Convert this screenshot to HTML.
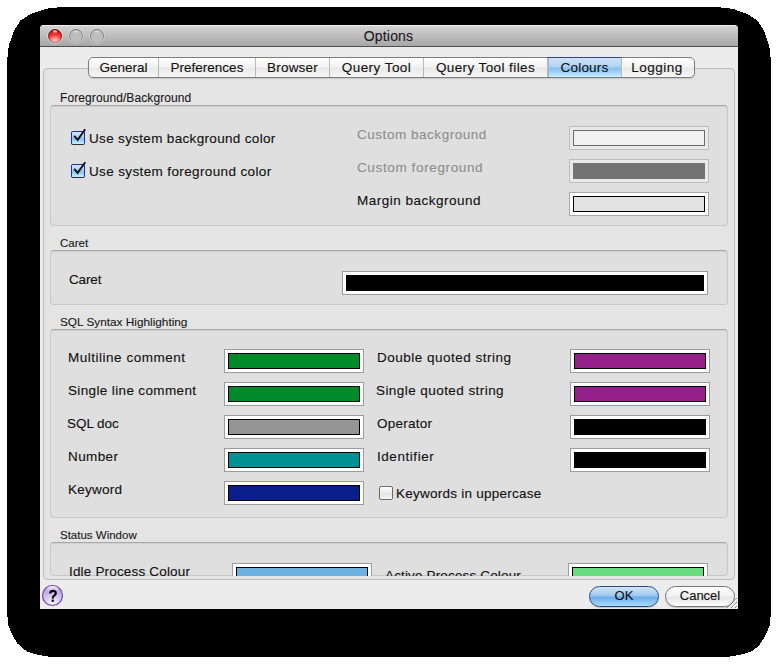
<!DOCTYPE html>
<html><head><meta charset="utf-8">
<style>
*{box-sizing:border-box;margin:0;padding:0}
html,body{width:778px;height:664px;overflow:hidden;background:#fff}
body{position:relative;font-family:"Liberation Sans",sans-serif;color:#000;-webkit-text-stroke:0.12px currentColor}
div{position:absolute}
#shadow{left:7px;top:7px;width:764px;height:650px;background:#000;border-radius:55px 55px 45px 45px}
#win{left:40px;top:25px;width:698px;height:584px;background:#ececec;border-radius:4px 4px 0 0;overflow:hidden}
#title{left:40px;top:25px;width:698px;height:22px;background:linear-gradient(#ededed 0,#ededed 1px,#d3d3d3 1px,#bdbdbd 50%,#a7a7a7);border-bottom:1px solid #4d4d4d;border-radius:4px 4px 0 0}
#title .t{left:-0.5px;width:698px;top:3px;text-align:center;font-size:14px;line-height:16px;color:#1a1a1a;letter-spacing:0.18px}
.btn{top:29px;width:14px;height:14px;border-radius:50%}
.red{background:radial-gradient(circle at 50% 80%,#ffc8c8 0,#f05858 45%,#d81c1c 75%,#9a1a1a 100%);box-shadow:0 0 0 .5px rgba(90,0,0,.5)}
.gray{background:radial-gradient(circle at 50% 80%,#dedede 0,#cbcbcb 55%,#a9a9a9 85%,#8c8c8c 100%)}
.panel{left:43px;top:68px;width:692px;height:512px;background:#e4e4e4;border:1px solid #bdbdbd;border-radius:4px}
.tabs{left:88px;top:57px;height:21px;width:607px;border:1px solid #7d7d7d;border-radius:5px;background:linear-gradient(#fefefe,#f3f3f3 45%,#e9e9e9 55%,#f7f7f7);overflow:hidden;box-shadow:0 1px 1px rgba(0,0,0,.12)}
.tab{top:0;height:19px;font-size:13.5px;text-align:center;line-height:19px;border-right:1px solid #b9b9b9;white-space:nowrap;color:#111}
.sel{background:linear-gradient(#cfe3f7,#b0d3f2 45%,#88bfee 55%,#a6d8fa 80%,#c6f0ff);box-shadow:inset 1px 0 0 #9ab8d8}
.glabel{font-size:11.5px;line-height:14px;color:#1a1a1a;white-space:nowrap}
.gbox{background:#dfdfdf;border:1px solid #c8c8c8;border-top-color:#a9a9a9;border-radius:4px;box-shadow:inset 0 1px 0 #d0d0d0}
.lbl{font-size:13.5px;line-height:17px;color:#111;white-space:nowrap}
.dis{color:#8e8e8e}
.sw{height:24px;background:#fff;border:1px solid #9c9c9c}
.sw i{position:absolute;left:3px;top:3px;right:3px;bottom:3px;border:1px solid #000;display:block}
.swd{background:#e9e9e9;border-color:#bdbdbd}
.cb{width:14px;height:14px;border:1px solid #6b6b6b;border-radius:2px;background:linear-gradient(#fdfdfd,#ececec 50%,#e0e0e0 51%,#fafafa)}
.cbon{border-color:#1c2f9c;border-bottom-color:#2a2a40;background:linear-gradient(#d6e8fa,#a9d0f2 45%,#86c0ee 55%,#c6f2ff)}
.pbtn{top:586px;height:21px;border-radius:10.5px;font-size:13px;line-height:18px;box-shadow:0 1px 1px rgba(0,0,0,.18);text-align:center;color:#111}
</style></head><body>
<svg style="position:absolute;left:0;top:0" width="778" height="664"><path d="M7.0,63.0 L8.0,51.0 L9.0,45.0 L10.0,42.0 L11.0,39.5 L12.0,36.4 L13.0,33.7 L14.0,31.0 L15.0,29.0 L17.0,25.8 L19.0,23.0 L20.5,20.5 L23.0,19.0 L25.8,17.0 L29.0,15.0 L31.0,14.0 L33.7,13.0 L36.4,12.0 L39.5,11.0 L42.0,10.0 L45.0,9.0 L51.0,8.0 L63.0,7.0 L715.0,7.0 L727.0,8.0 L733.0,9.0 L736.0,10.0 L738.5,11.0 L741.6,12.0 L744.3,13.0 L747.0,14.0 L749.0,15.0 L752.2,17.0 L755.0,19.0 L757.5,20.5 L759.0,23.0 L761.0,25.8 L763.0,29.0 L764.0,31.0 L765.0,33.7 L766.0,36.4 L767.0,39.5 L768.0,42.0 L769.0,45.0 L770.0,51.0 L771.0,63.0 L771.0,611.0 L770.5,617.0 L769.5,626.0 L768.0,629.5 L767.0,632.0 L765.5,635.0 L764.0,638.0 L762.0,641.0 L760.5,643.5 L758.5,645.5 L756.5,647.5 L754.0,649.5 L751.0,651.5 L748.0,652.5 L744.5,653.8 L739.5,654.8 L734.0,655.8 L727.0,657.0 L51.0,657.0 L44.0,655.8 L38.5,654.8 L33.5,653.8 L30.0,652.5 L27.0,651.5 L24.0,649.5 L21.5,647.5 L19.5,645.5 L17.5,643.5 L16.0,641.0 L14.0,638.0 L12.5,635.0 L11.0,632.0 L10.0,629.5 L8.5,626.0 L7.5,617.0 L7.0,611.0 Z" fill="#000" shape-rendering="crispEdges"/></svg>
<div id="win"></div>
<div id="title"><div class="t">Options</div></div>
<svg style="position:absolute;left:46px;top:27px" width="62" height="18" viewBox="0 0 62 18">
<defs>
<radialGradient id="rg" cx="9" cy="15.5" r="11.5" gradientUnits="userSpaceOnUse"><stop offset="0" stop-color="#ffd4d4"/><stop offset=".35" stop-color="#fb9a9a"/><stop offset=".65" stop-color="#f03c3c"/><stop offset=".85" stop-color="#de2a2a"/><stop offset="1" stop-color="#a01616"/></radialGradient>
<radialGradient id="gg" cx="9" cy="15" r="11" gradientUnits="userSpaceOnUse"><stop offset="0" stop-color="#e0e0e0"/><stop offset=".6" stop-color="#d0d0d0"/><stop offset="1" stop-color="#bdbdbd"/></radialGradient>
<linearGradient id="hl" x1="0" y1="0" x2="0" y2="1"><stop offset="0" stop-color="#fff" stop-opacity=".95"/><stop offset="1" stop-color="#fff" stop-opacity="0"/></linearGradient>
<linearGradient id="rr" x1="0" y1="0" x2="0" y2="1"><stop offset="0" stop-color="#6a0e0e"/><stop offset=".6" stop-color="#a82828"/><stop offset="1" stop-color="#c86a6a"/></linearGradient>
<linearGradient id="gr" x1="0" y1="0" x2="0" y2="1"><stop offset="0" stop-color="#767676"/><stop offset=".6" stop-color="#8e8e8e"/><stop offset="1" stop-color="#b4b4b4"/></linearGradient>
</defs>
<circle cx="9" cy="9" r="7.6" fill="none" stroke="#dfe3e3" stroke-width="1" opacity=".6"/>
<circle cx="9" cy="9" r="6.5" fill="url(#rg)" stroke="url(#rr)" stroke-width="1"/>
<ellipse cx="9" cy="4.9" rx="2.3" ry="1.6" fill="url(#hl)"/>
<circle cx="30" cy="9" r="7.6" fill="none" stroke="#dadada" stroke-width="1" opacity=".5"/>
<circle cx="30" cy="9" r="6.5" fill="url(#gg)" stroke="url(#gr)" stroke-width="1"/>
<ellipse cx="30" cy="5" rx="2.6" ry="1.6" fill="url(#hl)" opacity=".6"/>
<circle cx="51" cy="9" r="7.6" fill="none" stroke="#dadada" stroke-width="1" opacity=".5"/>
<circle cx="51" cy="9" r="6.5" fill="url(#gg)" stroke="url(#gr)" stroke-width="1"/>
<ellipse cx="51" cy="5" rx="2.6" ry="1.6" fill="url(#hl)" opacity=".6"/>
</svg>

<div class="panel"></div>
<div class="tabs">
  <div class="tab" style="left:0;width:70px">General</div>
  <div class="tab" style="left:70px;width:97px">Preferences</div>
  <div class="tab" style="left:167px;width:74px;letter-spacing:0.2px">Browser</div>
  <div class="tab" style="left:241px;width:94px;letter-spacing:0.45px">Query Tool</div>
  <div class="tab" style="left:335px;width:124px;letter-spacing:0.4px">Query Tool files</div>
  <div class="tab sel" style="left:459px;width:74px;letter-spacing:0.2px">Colours</div>
  <div class="tab" style="left:531px;width:74px;border-right:0;letter-spacing:0.47px;background:transparent">Logging</div>
</div>

<div style="left:547px;top:57px;width:74px;height:1px;background:#34448a"></div>
<!-- group 1 -->
<div class="glabel" style="left:60px;top:91px;font-size:12px;letter-spacing:0.09px">Foreground/Background</div>
<div class="gbox" style="left:50px;top:105px;width:678px;height:121px"></div>
<div class="cb cbon" style="left:71px;top:131px"></div><svg style="position:absolute;left:69px;top:127px" width="20" height="20" viewBox="-2 -4 20 20"><path d="M3.2,4.8 L6.7,8.9 L14.2,-1.8" fill="none" stroke="#15151c" stroke-width="2" stroke-linecap="butt" stroke-linejoin="miter"/></svg>
<div class="lbl" style="left:89px;top:130px;letter-spacing:0.327px">Use system background color</div>
<div class="cb cbon" style="left:71px;top:164px"></div><svg style="position:absolute;left:69px;top:160px" width="20" height="20" viewBox="-2 -4 20 20"><path d="M3.2,4.8 L6.7,8.9 L14.2,-1.8" fill="none" stroke="#15151c" stroke-width="2" stroke-linecap="butt" stroke-linejoin="miter"/></svg>
<div class="lbl" style="left:89px;top:163px;letter-spacing:0.368px">Use system foreground color</div>
<div class="lbl dis" style="left:357px;top:126px;letter-spacing:0.534px">Custom background</div>
<div class="lbl dis" style="left:357px;top:159px;letter-spacing:0.623px">Custom foreground</div>
<div class="lbl" style="left:357px;top:192px;letter-spacing:0.500px">Margin background</div>
<div class="sw swd" style="left:569px;top:126px;width:140px"><i style="border-color:#6c6c6c;background:#f1f1f1"></i></div>
<div class="sw swd" style="left:569px;top:159px;width:140px"><i style="border-color:#737373;background:#737373"></i></div>
<div class="sw" style="left:569px;top:192px;width:140px;border-color:#a8a8a8"><i style="background:#e3e3e3"></i></div>

<!-- group 2 -->
<div class="glabel" style="left:60px;top:236px">Caret</div>
<div class="gbox" style="left:50px;top:250px;width:678px;height:55px"></div>
<div class="lbl" style="left:69px;top:271px;letter-spacing:-0.150px">Caret</div>
<div class="sw" style="left:342px;top:271px;width:366px"><i style="background:#000"></i></div>

<!-- group 3 -->
<div class="glabel" style="left:60px;top:315px;font-size:11.8px">SQL Syntax Highlighting</div>
<div class="gbox" style="left:50px;top:329px;width:678px;height:189px"></div>
<div class="lbl" style="left:68px;top:349px;letter-spacing:0.511px">Multiline comment</div>
<div class="lbl" style="left:68px;top:382px;letter-spacing:0.360px">Single line comment</div>
<div class="lbl" style="left:67px;top:415px;letter-spacing:-0.063px">SQL doc</div>
<div class="lbl" style="left:68px;top:448px;letter-spacing:0.380px">Number</div>
<div class="lbl" style="left:68px;top:481px;letter-spacing:0.230px">Keyword</div>
<div class="sw" style="left:224px;top:349px;width:140px"><i style="background:#008a2a"></i></div>
<div class="sw" style="left:224px;top:382px;width:140px"><i style="background:#008a2a"></i></div>
<div class="sw" style="left:224px;top:415px;width:140px"><i style="background:#959595"></i></div>
<div class="sw" style="left:224px;top:448px;width:140px"><i style="background:#009292"></i></div>
<div class="sw" style="left:224px;top:481px;width:140px"><i style="background:#0a1e8c"></i></div>
<div class="lbl" style="left:377px;top:349px;letter-spacing:0.493px">Double quoted string</div>
<div class="lbl" style="left:376px;top:382px;letter-spacing:0.435px">Single quoted string</div>
<div class="lbl" style="left:377px;top:415px;letter-spacing:0.257px">Operator</div>
<div class="lbl" style="left:377px;top:448px;letter-spacing:0.558px">Identifier</div>
<div class="sw" style="left:570px;top:349px;width:140px"><i style="background:#95208b"></i></div>
<div class="sw" style="left:570px;top:382px;width:140px"><i style="background:#95208b"></i></div>
<div class="sw" style="left:570px;top:415px;width:140px"><i style="background:#000"></i></div>
<div class="sw" style="left:570px;top:448px;width:140px"><i style="background:#000"></i></div>
<div class="cb" style="left:379px;top:486px"></div>
<div class="lbl" style="left:396px;top:485px;letter-spacing:0.245px">Keywords in uppercase</div>

<!-- group 4 (clipped) -->
<div class="glabel" style="left:60px;top:528px">Status Window</div>
<div style="left:44px;top:540px;width:690px;height:37px;overflow:hidden">
  <div class="gbox" style="left:6px;top:2px;width:678px;height:34px"></div>
  <div style="left:0;top:0;width:690px;height:36px;overflow:hidden">
  <div class="lbl" style="left:25px;top:23px;letter-spacing:0.174px">Idle Process Colour</div>
  <div class="sw" style="left:188px;top:23px;width:140px"><i style="background:#6cb2e0"></i></div>
  <div class="lbl" style="left:341px;top:27px;letter-spacing:0.150px">Active Process Colour</div>
  <div class="sw" style="left:524px;top:23px;width:140px"><i style="background:#68dc7e"></i></div>
  </div>
</div>

<!-- bottom -->
<svg style="position:absolute;left:40px;top:583px" width="25" height="25" viewBox="0 0 25 25">
<defs><radialGradient id="hg" cx="12.5" cy="21" r="16" gradientUnits="userSpaceOnUse"><stop offset="0" stop-color="#fdf6ff"/><stop offset=".45" stop-color="#ddd0f4"/><stop offset="1" stop-color="#b4a0e0"/></radialGradient>
<linearGradient id="hh" x1="0" y1="0" x2="0" y2="1"><stop offset="0" stop-color="#fff" stop-opacity=".9"/><stop offset="1" stop-color="#fff" stop-opacity="0"/></linearGradient></defs>
<circle cx="12.5" cy="12.5" r="10" fill="url(#hg)" stroke="#6c3f9c" stroke-width="1.1"/>
<ellipse cx="12.5" cy="6" rx="6" ry="3" fill="url(#hh)"/>
<path d="M10.2,10.6 C10.2,8.6 11.4,7.9 13,7.9 C14.7,7.9 15.8,8.9 15.8,10.3 C15.8,11.9 14.4,12.4 13.5,13.2 C12.9,13.8 12.8,14.4 12.8,15.6" fill="none" stroke="#0a0a0a" stroke-width="2.2"/><rect x="11.6" y="16.6" width="2.3" height="2.2" fill="#0a0a0a"/>
</svg>
<div class="pbtn" style="left:589px;width:70px;border:1px solid #2a4a8a;background:linear-gradient(#d4e6f9,#9ac6f0 48%,#6aaaea 52%,#a8dcff)">OK</div>
<div class="pbtn" style="left:665px;width:70px;border:1px solid #777;background:linear-gradient(#fdfdfd,#f1f1f1 48%,#e4e4e4 52%,#fcfcfc)">Cancel</div>
<svg style="position:absolute;left:724px;top:595px" width="14" height="14" viewBox="0 0 14 14">
<path d="M3,13 L13,3 M7,13 L13,7 M11,13 L13,11" stroke="#6a6a6a" stroke-width="1" stroke-dasharray="1.2,0.6"/>
<path d="M4,13 L13,4 M8,13 L13,8 M12,13 L13,12" stroke="#fff" stroke-width="1" opacity=".7"/>
</svg>
</body></html>
